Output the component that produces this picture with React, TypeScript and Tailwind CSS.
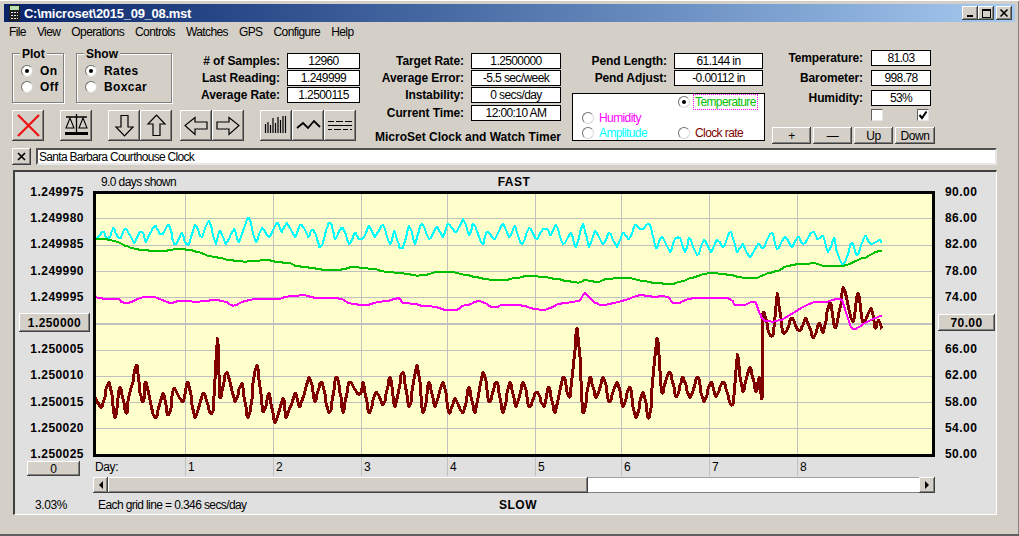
import type { ReactNode } from "react"

const raised =
  "shadow-[inset_-1px_-1px_0_#404040,inset_1px_1px_0_#ffffff,inset_-2px_-2px_0_#808080] bg-[#d4d0c8] flex items-center justify-center text-black"

const menuItems = ["File", "View", "Operations", "Controls", "Watches", "GPS", "Configure", "Help"]
const leftAxis = ["1.249975", "1.249980", "1.249985", "1.249990", "1.249995", "1.250000", "1.250005", "1.250010", "1.250015", "1.250020", "1.250025"]
const rightAxis = ["90.00", "86.00", "82.00", "78.00", "74.00", "70.00", "66.00", "62.00", "58.00", "54.00", "50.00"]
const hLines = [24, 51, 77, 103, 156, 182, 208, 234]
const vLines = [89, 177, 265, 351, 439, 525, 613, 701]
const dayCells = [
  { day: "1", w: "w-[88px]" },
  { day: "2", w: "w-[88px]" },
  { day: "3", w: "w-[86px]" },
  { day: "4", w: "w-[88px]" },
  { day: "5", w: "w-[86px]" },
  { day: "6", w: "w-[88px]" },
  { day: "7", w: "w-[88px]" },
  { day: "8", w: "w-[60px]" },
]

type Pt = [number, number]

// traced from 3x crops: x, y pairs relative to the crop's offset
const seg = (ox: number, oy: number, pts: number[]): Pt[] => {
  const out: Pt[] = []
  for (let i = 0; i < pts.length; i += 2) {
    out.push([ox + pts[i] / 3 - 96, oy + pts[i + 1] / 3 - 194])
  }
  return out
}

// rounds the trace off and snaps it to whole pixels, the plot is not antialiased
const smooth = (pts: Pt[]) => {
  const out: string[] = []
  const k = 0.35
  for (let i = 0; i < pts.length - 1; i++) {
    const p0 = pts[Math.max(i - 1, 0)]
    const p1 = pts[i]
    const p2 = pts[i + 1]
    const p3 = pts[Math.min(i + 2, pts.length - 1)]
    for (let s = 0; s < 5; s++) {
      const t = s / 5
      const h1 = 2 * t * t * t - 3 * t * t + 1
      const h2 = t * t * t - 2 * t * t + t
      const h3 = -2 * t * t * t + 3 * t * t
      const h4 = t * t * t - t * t
      const x = h1 * p1[0] + h2 * k * (p2[0] - p0[0]) + h3 * p2[0] + h4 * k * (p3[0] - p1[0])
      const y = h1 * p1[1] + h2 * k * (p2[1] - p0[1]) + h3 * p2[1] + h4 * k * (p3[1] - p1[1])
      out.push(`${Math.round(x)},${Math.round(y)}`)
    }
  }
  const last = pts[pts.length - 1]
  out.push(`${Math.round(last[0])},${Math.round(last[1])}`)
  return out.join(" ")
}

const cyan = smooth([
  ...seg(0, 170, [285,207,300,195,310,185,320,205,330,200,340,175,350,195,362,205,375,177,390,195,403,220,418,188,430,190,437,215,455,180,467,168,478,190,490,190,503,165,510,175,522,220,530,220,545,188,555,215,567,222,585,165,605,200,627,152,647,222,660,182,678,222,703,177,717,215,742,148,750,150,767,215,785,175,808,200,830,158,845,185,860,160,885,200,900,165,912,175,925,200,935,180,945,190,958,230,970,215,985,162,995,165,1005,207,1020,180]),
  ...seg(340, 170, [10,175,28,222,45,188,55,205,70,205,88,168,105,200,128,165,150,222,163,182,178,230,190,230,208,168,225,222,245,162,268,207,290,172,310,200,325,162,348,187,370,148,388,195,400,162,428,222,440,185,465,207,488,162,508,200,525,168,545,222,568,175,590,207,608,178,622,178,632,195,648,165,670,222,692,190,708,230,728,162,748,230,765,183,790,222,808,188,832,230,848,188,868,207,885,165,905,178,928,162,948,235,965,200,990,245,1005,207,1020,205]),
  ...seg(680, 170, [15,245,28,205,52,255,72,210,92,245,112,210,130,230,152,185,172,245,188,222,210,262,235,222,250,235,275,188,292,237,315,200,335,230,355,200,370,222,398,185,412,207,430,198,445,245,462,205,470,245,490,285,515,218,532,255,555,198,572,222,598,210,605,218]),
])

const green = smooth([
  ...seg(0, 170, [285,207,320,208,350,215,375,227,405,236,450,242,500,242,525,237,545,237,590,245,625,258,665,265,715,274,765,274,785,271,810,271,830,276,865,279,890,288,915,291,960,298,1020,299]),
  ...seg(340, 170, [40,291,100,297,135,305,185,310,205,312,230,317,260,314,285,307,330,306,385,316,425,325,455,329,500,329,555,319,610,321,665,330,715,338,735,330,770,336,805,327,860,324,915,334,985,342,1020,336]),
  ...seg(680, 170, [30,325,70,312,110,310,150,315,190,323,230,323,265,310,300,300,315,290,350,283,405,280,430,287,490,287,535,270,565,258,590,245,605,242]),
])

const magenta = smooth([
  ...seg(0, 170, [285,381,310,386,355,386,365,396,385,398,430,382,465,381,500,396,520,398,540,392,590,395,620,392,650,390,680,396,700,407,725,396,745,391,770,386,840,386,860,380,910,376,935,381,960,385,1020,386]),
  ...seg(340, 170, [25,398,55,404,85,404,130,393,148,392,165,386,178,386,190,398,230,403,245,408,280,410,320,420,350,420,365,408,390,403,410,394,428,396,448,407,465,412,490,405,550,407,580,416,615,420,655,403,690,397,720,390,735,369,762,395,785,405,845,394,900,376,945,382,965,378,985,382,1000,398,1020,398]),
  ...seg(680, 170, [30,386,90,384,150,386,165,404,195,404,225,395,240,432,252,450,280,455,310,447,345,425,395,398,440,396,485,390,510,465,527,477,555,460,585,445,605,437]),
])

const maroon = smooth([
  ...seg(0, 360, [285,112,305,140,328,65,345,175,360,80,378,160,385,115,398,65,410,15,420,100,430,125,437,65,465,175,490,100,500,160,510,155,522,85,548,125,565,65,585,175,610,100,630,158,640,140,652,-66,660,115,680,35,705,125,725,70,745,175,770,15,790,155,808,100,825,190,850,115,858,175,885,100,900,140,928,50,945,125,965,65,988,160,1008,50,1020,100]),
  ...seg(340, 360, [10,160,28,65,50,100,62,100,70,65,88,160,108,95,130,135,150,50,165,140,188,35,208,140,232,15,250,160,268,65,285,140,310,65,328,160,345,115,370,160,388,80,405,160,430,35,448,125,470,65,490,160,510,65,528,140,550,65,568,140,590,95,612,140,628,80,645,160,670,50,690,110,712,-96,730,160,750,50,768,115,790,50,808,125,832,65,850,140,870,80,887,175,910,95,928,175,952,-66,965,100,988,35,1008,110,1020,75]),
  ...seg(680, 360, [10,50,30,115,52,50,72,125,92,65,108,110,130,65,150,130,160,125,172,-18,188,95,210,20,228,95,238,50,245,115,248,-141]),
  ...seg(680, 170, [268,490,280,490,292,368,310,490,335,445,350,475,362,480,378,445,400,505,418,460,430,490,450,395,465,475,480,415,490,352,518,455,533,368,550,460,573,415,585,475,595,450,605,478]),
])

function Radio({ on }: { on?: boolean }) {
  return (
    <span className="w-3 h-3 shrink-0 rounded-full bg-white border border-t-[#707070] border-l-[#707070] border-r-[#d8d8d8] border-b-[#d8d8d8] flex items-center justify-center">
      {on && <span className="w-1 h-1 rounded-full bg-black" />}
    </span>
  )
}

function Group({ title, width, children }: { title: string; width: string; children: ReactNode }) {
  return (
    <div className={`relative h-[50px] ${width} border border-[#808080] shadow-[1px_1px_0_#ffffff,inset_1px_1px_0_#ffffff] pt-[11px] pl-[8px] flex flex-col gap-[4px]`}>
      <span className="absolute -top-[7px] left-[7px] bg-[#d4d0c8] px-[2px] text-[12px] font-bold leading-[14px]">{title}</span>
      {children}
    </div>
  )
}

function GroupRadio({ label, on }: { label: string; on?: boolean }) {
  return (
    <div className="flex items-center gap-[7px] h-3">
      <Radio on={on} />
      <span className="text-[12px] font-bold tracking-[0.4px] leading-3">{label}</span>
    </div>
  )
}

function Field({ label, value, width, gap = "gap-[7px]" }: { label: string; value: string; width: string; gap?: string }) {
  return (
    <div className={`flex justify-end items-center h-4 ${gap}`}>
      <span className="text-[12px] font-bold tracking-[-0.1px] whitespace-nowrap">{label}</span>
      <div className={`${width} h-4 border border-black bg-white flex items-center justify-center text-[12px] tracking-[-0.6px] leading-none whitespace-nowrap`}>{value}</div>
    </div>
  )
}

function Tool({ children }: { children: ReactNode }) {
  return (
    <div className={`${raised} w-8 h-[31px]`}>
      <svg width="32" height="31" viewBox="0 0 32 31" fill="none" stroke="black">
        {children}
      </svg>
    </div>
  )
}

function Toolbar() {
  return (
    <div className="flex mt-[7px]">
      <Tool>
        <path d="M6 5 L27 26 M27 5 L6 26" stroke="#f01010" strokeWidth="2.2" />
      </Tool>
      <div className="ml-4">
        <Tool>
          <path d="M6 7 H27 M16.5 4 V22" strokeWidth="1.3" />
          <path d="M10 8 L6 18 H14 Z M23 8 L19 18 H27 Z" strokeWidth="1.1" />
          <path d="M5 23.5 H28" strokeWidth="3" />
        </Tool>
      </div>
      <div className="ml-4 flex">
        <Tool>
          <path d="M13 5.5 H20 V17 H25 L16.5 26 L8 17 H13 Z" strokeWidth="1.2" />
        </Tool>
        <Tool>
          <path d="M13 25.5 H20 V14 H25 L16.5 5 L8 14 H13 Z" strokeWidth="1.2" />
        </Tool>
      </div>
      <div className="ml-2 flex">
        <Tool>
          <path d="M27 12 V19 H15 V24.5 L5 15.5 L15 7.5 V12 Z" strokeWidth="1.2" />
        </Tool>
        <Tool>
          <path d="M5 12 V19 H17 V24.5 L27 15.5 L17 7.5 V12 Z" strokeWidth="1.2" />
        </Tool>
      </div>
      <div className="ml-4 flex">
        <Tool>
          <path
            d="M5.5 23 V14 M8 23 V12 M10.5 23 V15 M13 23 V8 M15.5 23 V13 M18 23 V7 M20.5 23 V10 M23 23 V6 M25.5 23 V6"
            strokeWidth="1.2"
          />
        </Tool>
        <Tool>
          <path d="M5 18 L11 13 L16 18 L22 11 L28 17" strokeWidth="1.8" />
        </Tool>
        <Tool>
          <path d="M4 11.5 H10 M12 11.5 H19 M21 11.5 H28 M4 15.5 H28 M4 19.5 H8 M10 19.5 H17 M19 19.5 H24 M26 19.5 H28" strokeWidth="1" />
        </Tool>
      </div>
    </div>
  )
}

function RadioPanel() {
  return (
    <div className="w-[193px] h-12 mt-[7px] border border-black bg-white grid grid-cols-[105px_1fr] grid-rows-[16px_16px_14px] text-[12px] tracking-[-0.6px] leading-none">
      <div />
      <div className="flex items-center gap-[4px]">
        <Radio on />
        <span className="text-[#00c000] outline-1 outline-dotted outline-[#ff00ff] px-[1px] py-[1px]">Temperature</span>
      </div>
      <div className="flex items-center gap-[5px] pl-[9px]">
        <Radio />
        <span className="text-[#ff00ff]">Humidity</span>
      </div>
      <div />
      <div className="flex items-center gap-[5px] pl-[9px]">
        <Radio />
        <span className="text-[#00ffff]">Amplitude</span>
      </div>
      <div className="flex items-center gap-[5px]">
        <Radio />
        <span className="text-[#800000]">Clock rate</span>
      </div>
    </div>
  )
}

function Checkbox({ checked }: { checked?: boolean }) {
  return (
    <div className="w-3 h-3 bg-white border border-t-[#606060] border-l-[#606060] border-r-[#e8e8e8] border-b-[#e8e8e8] flex items-center justify-center">
      {checked && (
        <svg width="10" height="10" viewBox="0 0 10 10" fill="none" stroke="black" strokeWidth="2">
          <path d="M1.5 5 L4 8 L8.5 1.5" />
        </svg>
      )}
    </div>
  )
}

function Chart() {
  return (
    <div className="h-[266px] border-[3px] border-black bg-[#ffffcc]">
      <svg width="836" height="260" viewBox="0 0 836 260" fill="none" className="block">
        {hLines.map((y) => (
          <line key={y} x1="0" x2="836" y1={y + 0.5} y2={y + 0.5} stroke="#c0c0c0" />
        ))}
        <line x1="0" x2="836" y1="130" y2="130" stroke="#c0c0c0" strokeWidth="2" />
        {vLines.map((x) => (
          <line key={x} x1={x + 0.5} x2={x + 0.5} y1="0" y2="260" stroke="#c0c0c0" />
        ))}
        <g shapeRendering="crispEdges" strokeLinejoin="round">
          <polyline points={cyan} stroke="#00ffff" strokeWidth="2" />
          <polyline points={green} stroke="#00c000" strokeWidth="2" />
          <polyline points={maroon} stroke="#800000" strokeWidth="3" />
          <polyline points={magenta} stroke="#ff00ff" strokeWidth="2" />
        </g>
      </svg>
    </div>
  )
}

function Scrollbar() {
  return (
    <div className="flex h-4 mt-[1px]">
      <div className={`${raised} w-[15px] h-4`}>
        <span className="w-0 h-0 border-y-[4px] border-y-transparent border-r-[4px] border-r-black" />
      </div>
      <div className={`${raised} w-[480px] h-4`} />
      <div className="flex-1 bg-white border-y border-t-[#a0a0a0] border-b-[#808080]" />
      <div className={`${raised} w-4 h-4`}>
        <span className="w-0 h-0 border-y-[4px] border-y-transparent border-l-[4px] border-l-black" />
      </div>
    </div>
  )
}

export default function App() {
  return (
    <div className="w-[1019px] h-[536px] overflow-hidden bg-[#d4d0c8] p-1 text-black font-['Liberation_Sans',Arial,sans-serif] shadow-[inset_0_1px_0_#ffffff,inset_0_-2px_0_#606060,inset_-1px_0_0_#808080]">
      {/* title bar */}
      <div className="h-[18px] flex items-center bg-gradient-to-r from-[#0a246a] to-[#a6caf0] pl-[5px] pr-[3px]">
        <svg width="11" height="16" viewBox="0 0 11 16" className="shrink-0">
          <rect width="11" height="16" fill="#202020" />
          <rect x="1" y="1" width="9" height="4" fill="#b8e0b0" />
          <path d="M2 7 h2 v1 h-2z M5 7 h2 v1 h-2z M8 7 h1 v1 h-1z M2 10 h2 v1 h-2z M5 10 h2 v1 h-2z M8 10 h1 v1 h-1z M2 13 h2 v1 h-2z M5 13 h2 v1 h-2z M8 13 h1 v1 h-1z" fill="#e8e8e8" />
        </svg>
        <span className="ml-[4px] text-white font-bold text-[13px] tracking-[-0.27px] leading-none">C:\microset\2015_09_08.mst</span>
        <div className="ml-auto flex">
          <div className={`${raised} w-4 h-[14px]`}>
            <span className="w-[6px] h-[2px] bg-black mt-[6px]" />
          </div>
          <div className={`${raised} w-4 h-[14px]`}>
            <span className="w-[9px] h-[9px] border border-t-2 border-black" />
          </div>
          <div className={`${raised} w-4 h-[14px] ml-[2px]`}>
            <svg width="10" height="10" viewBox="0 0 10 10" stroke="black" strokeWidth="1.6">
              <path d="M1.5 1.5 L8.5 8.5 M8.5 1.5 L1.5 8.5" />
            </svg>
          </div>
        </div>
      </div>

      {/* menu */}
      <div className="h-5 flex items-center gap-[11px] pl-[5px] text-[12px] tracking-[-0.6px]">
        {menuItems.map((m) => (
          <span key={m}>{m}</span>
        ))}
      </div>

      {/* controls */}
      <div className="flex h-[104px] pl-[8px]">
        <div className="w-[348px] pt-[11px]">
          <div className="flex">
            <Group title="Plot" width="w-[52px]">
              <GroupRadio label="On" on />
              <GroupRadio label="Off" />
            </Group>
            <div className="ml-3">
              <Group title="Show" width="w-[96px]">
                <GroupRadio label="Rates" on />
                <GroupRadio label="Boxcar" />
              </Group>
            </div>
            <div className="w-[188px] flex flex-col gap-[1px]">
              <Field label="# of Samples:" value="12960" width="w-[73px]" />
              <Field label="Last Reading:" value="1.249999" width="w-[73px]" />
              <Field label="Average Rate:" value="1.2500115" width="w-[73px]" />
            </div>
          </div>
          <Toolbar />
        </div>

        <div className="w-[201px] pt-[11px] flex flex-col gap-[1px]">
          <Field label="Target Rate:" value="1.2500000" width="w-[90px]" />
          <Field label="Average Error:" value="-5.5 sec/week" width="w-[90px]" />
          <Field label="Instability:" value="0 secs/day" width="w-[90px]" />
          <div className="mt-[1px]">
            <Field label="Current Time:" value="12:00:10 AM" width="w-[90px]" />
          </div>
          <div className="mt-2 text-right text-[12px] font-bold whitespace-nowrap leading-[14px]">MicroSet Clock and Watch Timer</div>
        </div>

        <div className="ml-[11px] w-[193px] pt-[11px]">
          <div className="w-[191px] flex flex-col gap-[1px]">
            <Field label="Pend Length:" value="61.144 in" width="w-[89px]" />
            <Field label="Pend Adjust:" value="-0.00112 in" width="w-[89px]" />
          </div>
          <RadioPanel />
        </div>

        <div className="ml-[7px] w-[163px] pt-2">
          <div className="pr-1 flex flex-col gap-1">
            <Field label="Temperature:" value="81.03" width="w-[60px]" gap="gap-2" />
            <Field label="Barometer:" value="998.78" width="w-[60px]" gap="gap-2" />
            <Field label="Humidity:" value="53%" width="w-[60px]" gap="gap-2" />
          </div>
          <div className="flex mt-[3px] ml-[99px] gap-[34px]">
            <Checkbox />
            <Checkbox checked />
          </div>
          <div className="flex gap-[2px] mt-[6px] text-[12px] tracking-[-0.4px]">
            <div className={`${raised} w-[39px] h-[17px]`}>+</div>
            <div className={`${raised} w-[39px] h-[17px]`}>—</div>
            <div className={`${raised} w-[39px] h-[17px]`}>Up</div>
            <div className={`${raised} w-10 h-[17px]`}>Down</div>
          </div>
        </div>
      </div>

      {/* clock name */}
      <div className="flex mt-[2px] ml-[8px] h-[17px]">
        <div className={`${raised} w-[19px] h-[17px]`}>
          <svg width="9" height="9" viewBox="0 0 9 9" stroke="black" strokeWidth="1.7">
            <path d="M1 1 L8 8 M8 1 L1 8" />
          </svg>
        </div>
        <div className="ml-[5px] w-[961px] bg-white border-2 border-t-[#505050] border-l-[#505050] border-r-[#e8e8e8] border-b-[#e8e8e8] flex items-center pl-[1px] text-[12px] tracking-[-0.7px] leading-none">
          Santa Barbara Courthouse Clock
        </div>
      </div>

      {/* plot panel */}
      <div className="mt-[5px] ml-[9px] w-[984px] h-[345px] flex bg-[#e0e0e0] border-t-2 border-l-2 border-r border-b border-t-[#404040] border-l-[#404040] border-r-white border-b-white">
        <div className="w-[78px] pt-[13px]">
          <div className="h-[276px] flex flex-col justify-between items-end pr-[9px]">
            {leftAxis.map((v) =>
              v === "1.250000" ? (
                <div key={v} className="h-[14px] flex items-center -mr-[6px]">
                  <div className={`${raised} w-[71px] h-[19px] text-[12px] font-bold tracking-[0.4px]`}>{v}</div>
                </div>
              ) : (
                <span key={v} className="h-[14px] text-[12px] font-bold tracking-[0.45px] leading-[14px]">
                  {v}
                </span>
              ),
            )}
          </div>
          <div className={`${raised} ml-3 w-[53px] h-[15px] text-[12px]`}>0</div>
          <div className="mt-[22px] ml-5 h-[14px] text-[12px] tracking-[-0.4px] leading-[14px]">3.03%</div>
        </div>

        <div className="w-[842px]">
          <div className="h-[19px] grid grid-cols-3 items-center text-[12px]">
            <span className="pl-2 tracking-[-0.6px]">9.0 days shown</span>
            <span className="text-center font-bold tracking-[0.5px]">FAST</span>
          </div>
          <Chart />
          <div className="h-[19px] flex text-[12px] leading-[14px]">
            <span className="w-[92px] pl-[2px] pt-[3px] tracking-[-0.4px]">Day:</span>
            {dayCells.map((c) => (
              <span key={c.day} className={`${c.w} border-l border-[#c0c0c0] pl-[2px] pt-[3px]`}>
                {c.day}
              </span>
            ))}
          </div>
          <Scrollbar />
          <div className="mt-[5px] h-[14px] grid grid-cols-3 items-center text-[12px] leading-[14px]">
            <span className="pl-[5px] whitespace-nowrap tracking-[-0.6px]">Each grid line = 0.346 secs/day</span>
            <span className="text-center font-bold tracking-[0.5px] pl-2">SLOW</span>
          </div>
        </div>

        <div className="flex-1 pt-[13px]">
          <div className="h-[276px] flex flex-col justify-between pl-[10px]">
            {rightAxis.map((v) =>
              v === "70.00" ? (
                <div key={v} className="h-[14px] flex items-center -ml-[7px]">
                  <div className={`${raised} w-[57px] h-[17px] text-[12px] font-bold tracking-[0.4px]`}>{v}</div>
                </div>
              ) : (
                <span key={v} className="h-[14px] text-[12px] font-bold tracking-[0.45px] leading-[14px]">
                  {v}
                </span>
              ),
            )}
          </div>
        </div>
      </div>
    </div>
  )
}
